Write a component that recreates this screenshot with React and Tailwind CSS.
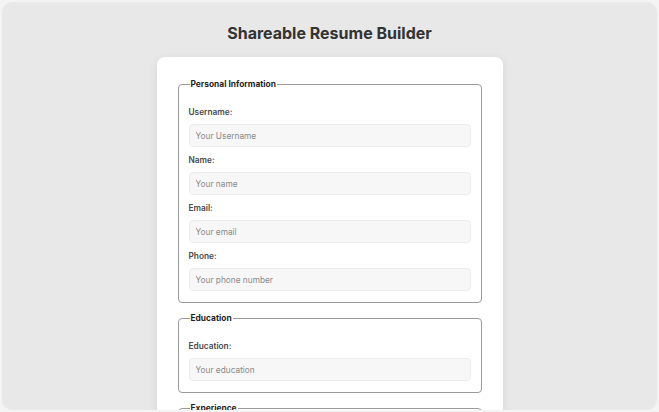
import React from 'react';

const personal = [
    { label: 'Username:', placeholder: 'Your Username' },
    { label: 'Name:', placeholder: 'Your name' },
    { label: 'Email:', placeholder: 'Your email' },
    { label: 'Phone:', placeholder: 'Your phone number' },
];

function Field({ label, placeholder }) {
    return (
        <div className="flex flex-col">
            <label className="text-[8.3px] leading-[12px] font-semibold text-[#4a4a4a] mb-[6px]">{label}</label>
            <input
                placeholder={placeholder}
                className="h-[23px] w-full rounded-[4px] border border-[#ececec] bg-[#f7f7f7] px-[6px] text-[8.3px] text-[#333] placeholder:text-[#8a8a8a] outline-none"
            />
        </div>
    );
}

function Section({ title, children }) {
    return (
        <fieldset className="border border-[#9a9a9a] rounded-[4px] px-[10px] pb-[11px] pt-[16px]">
            <legend className="ml-[1px] px-[1px] text-[8.4px] leading-[12px] font-bold text-[#1f1f1f]">{title}</legend>
            <div className="flex flex-col gap-[7px]">{children}</div>
        </fieldset>
    );
}

export default function App() {
    return (
        <div className="h-[412px] w-full bg-[#f4f4f4] p-[2px] overflow-hidden" style={{ fontFamily: 'Inter, "Noto Sans", sans-serif' }}>
            <div className="h-full w-full rounded-[10px] bg-[#e8e8e8] overflow-hidden flex flex-col items-center">
                <h1 className="mt-[20px] text-[16px] leading-[22px] font-bold text-[#333]">Shareable Resume Builder</h1>
                <div className="mt-[13px] w-[346px] bg-white rounded-[8px] shadow-[0_2px_10px_rgba(0,0,0,0.08)] px-[21px] pt-[21px] pb-[20px] flex flex-col gap-[9px]">
                    <Section title="Personal Information">
                        {personal.map(f => (
                            <Field key={f.label} {...f} />
                        ))}
                    </Section>
                    <Section title="Education">
                        <Field label="Education:" placeholder="Your education" />
                    </Section>
                    <Section title="Experience">
                        <Field label="Experience:" placeholder="Your experience" />
                    </Section>
                </div>
            </div>
        </div>
    );
}
